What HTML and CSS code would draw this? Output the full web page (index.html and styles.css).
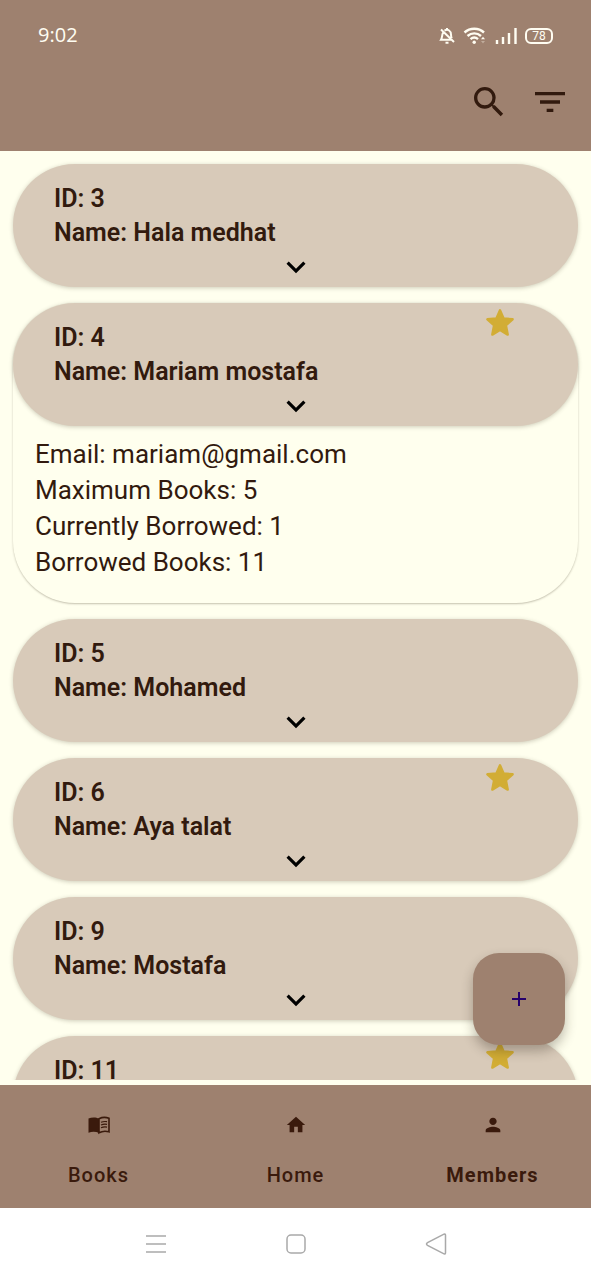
FILE: index.html
```html
<!DOCTYPE html>
<html lang="en">
<head>
<meta charset="utf-8">
<meta name="viewport" content="width=device-width, initial-scale=1">
<title>Members</title>
<link rel="stylesheet" href="styles.css">
</head>
<body>
<svg class="defs" aria-hidden="true">
  <symbol id="chevron" viewBox="0 0 24 24"><path d="M7.41 8.59 12 13.17l4.59-4.58L18 10l-6 6-6-6z"/></symbol>
  <symbol id="star" viewBox="0 0 30 30"><path d="M15 2.300 18.600 10.400 27.600 11.300 20.900 17.300 22.700 26.600 15 22 7.300 26.600 9.100 17.300 2.400 11.300 11.400 10.400z" stroke="currentColor" stroke-width="2.400" stroke-linejoin="round"/></symbol>
</svg>
<div class="screen">
  <header class="app-bar">
    <div class="status">
      <span class="time">9:02</span>
      <div class="indicators">
        <svg class="bell" viewBox="0 0 16 18" aria-label="Muted"><path d="M4.200 5.500C2.800 7.500 3.400 10.500 2 12.800h10M5.500 3.700C9 1.500 12 4 12 7.500c0 1.500.2 2.700.7 3.800M8 1v1.500M6.500 15.700h3M2 2.500l13 12.500"/></svg>
        <svg class="wifi" viewBox="0 0 24 18" aria-label="Wi-Fi"><path d="M1.500 5.500c5.500-5 14-5 19.500 0M4.500 9c4-3.500 9.500-3.500 13.500 0M7.500 12.200c2.300-2 5.200-2 7.500 0"/><circle cx="11.200" cy="15.300" r="1.700"/><path class="arrow" d="m18 12.300 2-2.500 2 2.500z"/><path class="arrow dim" d="m18 14 2 2.500 2-2.500z"/></svg>
        <svg class="signal" viewBox="0 0 22 18" aria-label="Signal"><path d="M2 13v4M8 10v7M14 6v11M20.500 1v16"/></svg>
        <span class="battery">78</span>
      </div>
    </div>
    <div class="toolbar">
      <button class="icon-button" aria-label="Search"><svg viewBox="0 0 24 24"><path d="M15.500 14h-.79l-.28-.27A6.471 6.471 0 0 0 16 9.500 6.500 6.500 0 1 0 9.500 16c1.610 0 3.090-.59 4.230-1.570l.27.28v.79l5 4.990L20.490 19l-4.990-5zm-6 0C7.010 14 5 11.990 5 9.500S7.010 5 9.500 5 14 7.010 14 9.500 11.990 14 9.500 14z"/></svg></button>
      <button class="icon-button" aria-label="Filter"><svg viewBox="0 0 24 24"><path d="M10 18h4v-2h-4v2zM3 6v2h18V6H3zm3 7h12v-2H6v2z"/></svg></button>
    </div>
  </header>

  <main class="list">
    <article class="member">
      <div class="card"><h2>ID: 3</h2><h2>Name: Hala medhat</h2>
        <button class="expand" aria-label="Show details"><svg><use href="#chevron"/></svg></button></div>
    </article>
    <article class="member open">
      <div class="card"><h2>ID: 4</h2><h2>Name: Mariam mostafa</h2>
        <svg class="star"><use href="#star"/></svg>
        <button class="expand" aria-label="Hide details"><svg><use href="#chevron"/></svg></button></div>
      <div class="details">
        <p>Email: mariam@gmail.com</p>
        <p>Maximum Books: 5</p>
        <p>Currently Borrowed: 1</p>
        <p>Borrowed Books: 11</p>
      </div>
    </article>
    <article class="member">
      <div class="card"><h2>ID: 5</h2><h2>Name: Mohamed</h2>
        <button class="expand" aria-label="Show details"><svg><use href="#chevron"/></svg></button></div>
    </article>
    <article class="member">
      <div class="card"><h2>ID: 6</h2><h2>Name: Aya talat</h2>
        <svg class="star"><use href="#star"/></svg>
        <button class="expand" aria-label="Show details"><svg><use href="#chevron"/></svg></button></div>
    </article>
    <article class="member">
      <div class="card"><h2>ID: 9</h2><h2>Name: Mostafa</h2>
        <button class="expand" aria-label="Show details"><svg><use href="#chevron"/></svg></button></div>
    </article>
    <article class="member">
      <div class="card"><h2>ID: 11</h2>
        <svg class="star"><use href="#star"/></svg></div>
    </article>
  </main>

  <div class="bottom">
    <button class="fab" aria-label="Add member"><svg viewBox="0 0 14 14"><path d="M7 0v14M0 7h14"/></svg></button>
    <nav class="tabs">
      <a href="#books"><svg viewBox="0 0 24 24"><path d="M1.500 5.500C4.500 4 9 4 12 5.600V20c-3-1.600-7-1.700-10.500-.3z"/><path class="page" d="M12 5.700c3-1.500 7-1.700 10-.4v13.500c-3-.9-7-.7-10 1z"/><path class="rule" d="M14 9.300c2-.8 4-1 6-.6M14 12c2-.8 4-1 6-.6M14 14.700c2-.8 4-1 6-.6"/></svg><span>Books</span></a>
      <a href="#home"><svg viewBox="0 0 24 24"><path d="M10 20v-6h4v6h5v-8h3L12 3 2 12h3v8z"/></svg><span>Home</span></a>
      <a href="#members" class="active" aria-current="page"><svg viewBox="0 0 24 24"><path d="M12 12c2.210 0 4-1.790 4-4s-1.790-4-4-4-4 1.790-4 4 1.790 4 4 4zm0 2c-2.670 0-8 1.340-8 4v2h16v-2c0-2.660-5.330-4-8-4z"/></svg><span>Members</span></a>
    </nav>
  </div>

  <footer class="system">
    <button aria-label="Recent apps"><svg viewBox="0 0 24 24"><path d="M2 4h20M2 12h20M2 20h20"/></svg></button>
    <button aria-label="Home screen"><svg viewBox="0 0 24 24"><rect x="3" y="3" width="18" height="18" rx="4"/></svg></button>
    <button aria-label="Back"><svg viewBox="0 0 24 24"><path d="M20 2.200 3.500 10.600q-2 1.400 0 2.800L20 21.800q1.500.5 1.500-1V3.200q0-1.500-1.500-1z"/></svg></button>
  </footer>
</div>
</body>
</html>
```

FILE: styles.css
```css
:root {
  --brown: #9e816f;
  --tan: #d8cab9;
  --ivory: #ffffee;
  --ink: #321a0e;
  --side: 13px;
}
* { box-sizing: border-box; }
body {
  margin: 0;
  background: var(--ivory);
  color: var(--ink);
  font-family: Roboto, "Liberation Sans", sans-serif;
}
button {
  padding: 0;
  border: 0;
  background: none;
  color: inherit;
  font: inherit;
  cursor: pointer;
}
svg { display: block; fill: currentColor; }
.defs { display: none; }
.screen { display: flex; flex-direction: column; height: 100vh; }

.app-bar { flex: none; background: var(--brown); padding-bottom: 29px; }
.status {
  display: flex;
  align-items: center;
  justify-content: space-between;
  height: 72px;
  padding: 0 38px;
  color: #fffdf2;
}
.time { font-family: "Open Sans", sans-serif; font-size: 20px; line-height: 24px; padding-bottom: 2px; }
.indicators { display: flex; align-items: center; gap: 8px; }
.indicators svg { height: 18px; fill: none; stroke: currentColor; stroke-width: 2.4; }
.bell { width: 16px; }
.indicators .bell { stroke-width: 2; }
.wifi { width: 24px; }
.wifi circle, .wifi .arrow { fill: currentColor; stroke: none; }
.wifi .dim { opacity: .35; }
.signal { width: 22px; }
.battery {
  width: 28px;
  height: 16px;
  border: 2px solid;
  border-radius: 6px;
  font-size: 12px;
  line-height: 12px;
  text-align: center;
}
.toolbar {
  display: flex;
  justify-content: flex-end;
  gap: 21px;
  padding: 10px 21px 0;
}
.icon-button svg { width: 40px; height: 40px; }

.list {
  flex: 1;
  min-height: 0;
  overflow: hidden;
  display: flex;
  flex-direction: column;
  gap: 16px;
  padding: 13px var(--side) 0;
}
.member { flex: none; border-radius: 62px; }
.open { box-shadow: 0 1px 2px rgba(60, 50, 30, .3); }
.card {
  position: relative;
  min-height: 123px;
  padding: 18px 41px 0;
  border-radius: 62px;
  background: var(--tan);
  box-shadow: 0 1px 4px rgba(60, 50, 30, .25);
}
.card h2 {
  margin: 0;
  font-size: 25px;
  font-weight: 600;
  line-height: 34px;
}
.expand { display: block; margin: -2px auto 0; color: #000; }
.expand svg { width: 38px; height: 38px; }
.star {
  position: absolute;
  top: 5px;
  right: 63px;
  width: 30px;
  height: 30px;
  color: #d2ad35;
}
.details { padding: 10px 22px 23px; }
.details p { margin: 0; font-size: 26px; line-height: 36px; }

.bottom { position: relative; flex: none; margin-top: 5px; }
.fab {
  position: absolute;
  right: 26px;
  bottom: calc(100% + 40px);
  display: grid;
  place-items: center;
  width: 92px;
  height: 92px;
  border-radius: 26px;
  background: var(--brown);
  box-shadow: 0 6px 12px rgba(40, 30, 20, .3);
}
.fab svg { width: 14px; height: 14px; stroke: #26006b; stroke-width: 2; }
.tabs {
  display: grid;
  grid-template-columns: repeat(3, 1fr);
  padding: 28px 0 21px;
  background: var(--brown);
}
.tabs a {
  display: flex;
  flex-direction: column;
  align-items: center;
  gap: 26px;
  color: #3a1a0c;
  font-size: 20px;
  font-weight: 500;
  line-height: 24px;
  letter-spacing: 1px;
  text-decoration: none;
}
.tabs svg { width: 24px; height: 24px; }
.tabs a:nth-child(n + 2) svg { padding: 1px; }
.tabs .active { font-weight: 700; }
.tabs .page, .tabs .rule { fill: none; stroke: currentColor; stroke-width: 1.6; }
.tabs .rule { stroke-width: 1.2; }

.system {
  flex: none;
  display: flex;
  justify-content: center;
  gap: 116px;
  height: 72px;
  background: #fff;
  color: #a9a9a9;
}
.system svg { width: 24px; height: 24px; fill: none; stroke: currentColor; stroke-width: 1.5; }
```
